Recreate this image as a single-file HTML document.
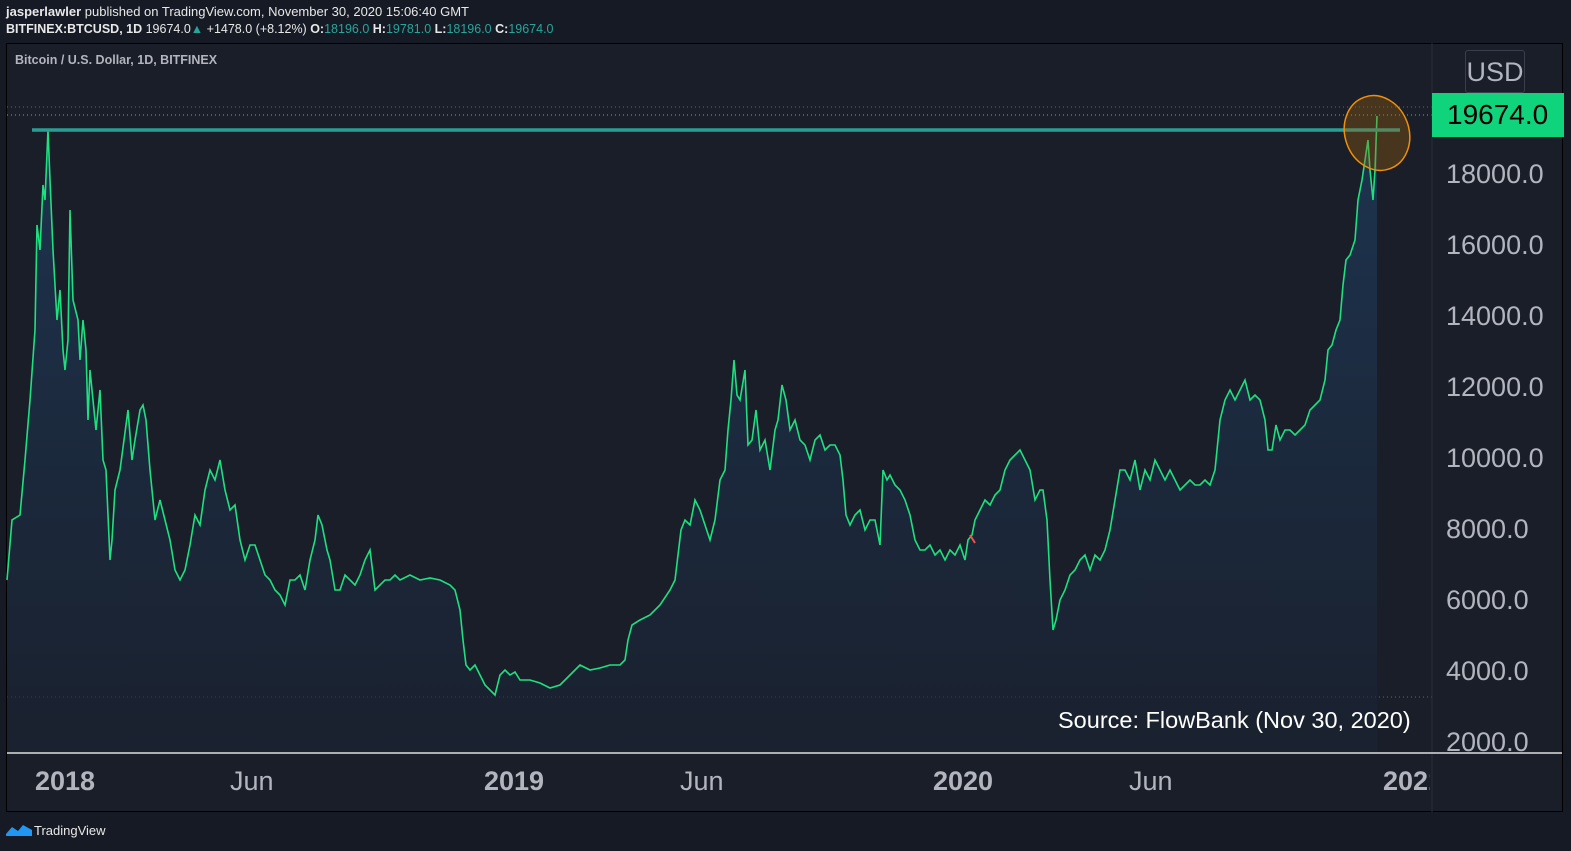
<!DOCTYPE html>
<html><head><style>
body{margin:0;width:1571px;height:851px;background:#161a25;font-family:"Liberation Sans",sans-serif;overflow:hidden;position:relative}
.t{position:absolute;white-space:nowrap}
</style></head><body>
<div class="t" style="left:6px;top:4px;font-size:13px;color:#e8e8e8"><b>jasperlawler</b> published on TradingView.com, November 30, 2020 15:06:40 GMT</div>
<div class="t" style="left:6px;top:22px;font-size:12.5px;color:#e8e8e8"><b>BITFINEX:BTCUSD, 1D</b> 19674.0<span style="color:#26a69a">▲</span> +1478.0 (+8.12%) <b>O:</b><span style="color:#26a69a">18196.0</span> <b>H:</b><span style="color:#26a69a">19781.0</span> <b>L:</b><span style="color:#26a69a">18196.0</span> <b>C:</b><span style="color:#26a69a">19674.0</span></div>
<div style="position:absolute;left:6px;top:43px;width:1557px;height:769px;background:#1a1e29;border:1px solid #000;box-sizing:border-box"></div>
<div class="t" style="left:15px;top:53px;font-size:12.5px;color:#b2b5be;font-weight:bold">Bitcoin / U.S. Dollar, 1D, BITFINEX</div>
<svg style="position:absolute;left:0;top:0" width="1571" height="851">
<defs><linearGradient id="g" x1="0" y1="0" x2="0" y2="1"><stop offset="0" stop-color="#1e3a5a" stop-opacity=".8"/><stop offset="1" stop-color="#1a2333" stop-opacity=".6"/></linearGradient></defs>
<line x1="7" y1="107" x2="1432" y2="107" stroke="#666" stroke-dasharray="1,3"/>
<line x1="7" y1="115" x2="1432" y2="115" stroke="#e57373" stroke-dasharray="1,3"/>
<line x1="7" y1="697" x2="1432" y2="697" stroke="#666" stroke-dasharray="1,3"/>
<polygon fill="url(#g)" points="7,753 7,580 12,520 20,515 25,460 30,400 35,330 37,225 40,250 43,185 45,200 48,130 50,180 53,250 57,320 60,290 63,350 65,370 68,340 70,210 73,300 78,320 80,360 83,320 86,350 88,420 90,370 93,400 96,430 100,390 103,460 106,470 110,560 112,540 115,490 120,470 124,440 128,410 132,460 135,440 140,410 143,405 146,420 150,470 155,520 160,500 165,520 170,540 175,570 180,580 185,570 190,545 195,515 200,525 205,490 210,470 215,480 220,460 225,490 230,510 235,505 240,540 245,560 250,545 255,545 260,560 265,575 270,580 275,590 280,595 285,605 290,580 295,580 300,575 305,590 310,560 315,540 318,515 322,525 327,550 330,560 335,590 340,590 345,575 350,580 355,585 360,575 365,560 370,550 375,590 380,585 385,580 390,580 395,575 400,580 410,575 420,580 430,578 440,580 450,585 455,590 460,610 463,640 466,665 470,670 475,665 480,675 485,685 490,690 495,695 500,675 505,670 510,675 515,672 520,680 530,680 540,683 550,688 560,685 570,675 575,670 580,665 590,670 600,668 610,665 620,665 625,660 628,640 632,625 640,620 650,615 660,605 670,590 675,580 678,555 681,530 685,520 690,525 695,500 700,510 705,525 710,540 715,520 720,480 725,470 728,430 731,400 734,360 737,395 740,400 745,370 748,445 752,440 756,410 760,450 765,440 770,470 775,430 778,420 782,385 786,400 790,430 795,420 800,440 805,445 810,460 815,440 820,435 825,450 830,445 835,445 840,455 843,480 846,515 850,525 855,515 860,510 865,530 870,520 875,520 880,545 883,470 887,480 890,475 895,485 900,490 905,500 910,515 915,540 920,550 925,550 930,545 935,555 940,550 945,560 950,550 955,555 960,545 965,560 968,540 972,535 975,520 980,510 985,500 990,505 995,495 1000,490 1005,470 1010,460 1015,455 1020,450 1025,460 1030,470 1035,500 1040,490 1043,490 1047,520 1050,580 1053,630 1056,620 1060,600 1065,590 1070,575 1075,570 1080,560 1085,555 1090,570 1095,555 1100,560 1105,550 1110,530 1115,500 1120,470 1125,470 1130,480 1135,460 1140,490 1145,470 1150,480 1155,460 1160,470 1165,480 1170,470 1175,480 1180,490 1185,485 1190,480 1195,485 1200,485 1205,480 1210,485 1215,470 1220,420 1225,400 1230,390 1235,400 1240,390 1245,380 1250,400 1255,395 1260,400 1265,420 1268,450 1272,450 1276,425 1280,440 1285,430 1290,430 1295,435 1300,430 1305,425 1310,410 1315,405 1320,400 1325,380 1328,350 1332,345 1336,330 1340,320 1343,285 1346,260 1350,255 1355,240 1358,200 1362,180 1365,160 1368,140 1370,170 1373,200 1375,170 1377,116 1377,753"/>
<polyline fill="none" stroke="#1fe07f" stroke-width="1.6" points="7,580 12,520 20,515 25,460 30,400 35,330 37,225 40,250 43,185 45,200 48,130 50,180 53,250 57,320 60,290 63,350 65,370 68,340 70,210 73,300 78,320 80,360 83,320 86,350 88,420 90,370 93,400 96,430 100,390 103,460 106,470 110,560 112,540 115,490 120,470 124,440 128,410 132,460 135,440 140,410 143,405 146,420 150,470 155,520 160,500 165,520 170,540 175,570 180,580 185,570 190,545 195,515 200,525 205,490 210,470 215,480 220,460 225,490 230,510 235,505 240,540 245,560 250,545 255,545 260,560 265,575 270,580 275,590 280,595 285,605 290,580 295,580 300,575 305,590 310,560 315,540 318,515 322,525 327,550 330,560 335,590 340,590 345,575 350,580 355,585 360,575 365,560 370,550 375,590 380,585 385,580 390,580 395,575 400,580 410,575 420,580 430,578 440,580 450,585 455,590 460,610 463,640 466,665 470,670 475,665 480,675 485,685 490,690 495,695 500,675 505,670 510,675 515,672 520,680 530,680 540,683 550,688 560,685 570,675 575,670 580,665 590,670 600,668 610,665 620,665 625,660 628,640 632,625 640,620 650,615 660,605 670,590 675,580 678,555 681,530 685,520 690,525 695,500 700,510 705,525 710,540 715,520 720,480 725,470 728,430 731,400 734,360 737,395 740,400 745,370 748,445 752,440 756,410 760,450 765,440 770,470 775,430 778,420 782,385 786,400 790,430 795,420 800,440 805,445 810,460 815,440 820,435 825,450 830,445 835,445 840,455 843,480 846,515 850,525 855,515 860,510 865,530 870,520 875,520 880,545 883,470 887,480 890,475 895,485 900,490 905,500 910,515 915,540 920,550 925,550 930,545 935,555 940,550 945,560 950,550 955,555 960,545 965,560 968,540 972,535 975,520 980,510 985,500 990,505 995,495 1000,490 1005,470 1010,460 1015,455 1020,450 1025,460 1030,470 1035,500 1040,490 1043,490 1047,520 1050,580 1053,630 1056,620 1060,600 1065,590 1070,575 1075,570 1080,560 1085,555 1090,570 1095,555 1100,560 1105,550 1110,530 1115,500 1120,470 1125,470 1130,480 1135,460 1140,490 1145,470 1150,480 1155,460 1160,470 1165,480 1170,470 1175,480 1180,490 1185,485 1190,480 1195,485 1200,485 1205,480 1210,485 1215,470 1220,420 1225,400 1230,390 1235,400 1240,390 1245,380 1250,400 1255,395 1260,400 1265,420 1268,450 1272,450 1276,425 1280,440 1285,430 1290,430 1295,435 1300,430 1305,425 1310,410 1315,405 1320,400 1325,380 1328,350 1332,345 1336,330 1340,320 1343,285 1346,260 1350,255 1355,240 1358,200 1362,180 1365,160 1368,140 1370,170 1373,200 1375,170 1377,116"/>
<line x1="970" y1="535" x2="975" y2="543" stroke="#ef5350" stroke-width="2"/>
<line x1="32" y1="130" x2="1400" y2="130" stroke="#2a9d94" stroke-width="3.5"/>
<ellipse cx="1377" cy="133" rx="32" ry="38" transform="rotate(-20 1377 133)" fill="#a0600a" fill-opacity=".35" stroke="#f0900a" stroke-width="1.5"/>
<line x1="1432" y1="43" x2="1432" y2="812" stroke="#2a2e39"/>
<line x1="7" y1="753" x2="1562" y2="753" stroke="#ddd" stroke-width="1.5"/>
<g transform="translate(6,822)" fill="#2196f3"><path d="M0 12 L6 5 L12 9 L17 3 L26 8 L26 14 L0 14Z"/></g>
</svg>
<div class="t" style="left:1058px;top:707px;font-size:23.5px;color:#fff">Source: FlowBank (Nov 30, 2020)</div>
<div style="position:absolute;left:1465px;top:50px;width:60px;height:43px;border:1px solid #3a3e4a;border-radius:3px;box-sizing:border-box;color:#b2b5be;font-size:27px;text-align:center;line-height:42px">USD</div>
<div style="position:absolute;left:1432px;top:93px;width:132px;height:44px;background:#0fd47c;color:#000;font-size:28px;line-height:44px;padding-left:15px;box-sizing:border-box">19674.0</div>
<div style="position:absolute;left:1446px;top:139px;color:#b2b5be;font-size:27px;line-height:71px">18000.0<br>16000.0<br>14000.0<br>12000.0<br>10000.0<br>8000.0<br>6000.0<br>4000.0<br>2000.0</div>
<div class="t" style="left:35px;top:766px;font-size:27px;color:#b2b5be;font-weight:bold">2018</div>
<div class="t" style="left:230px;top:766px;font-size:27px;color:#b2b5be">Jun</div>
<div class="t" style="left:484px;top:766px;font-size:27px;color:#b2b5be;font-weight:bold">2019</div>
<div class="t" style="left:680px;top:766px;font-size:27px;color:#b2b5be">Jun</div>
<div class="t" style="left:933px;top:766px;font-size:27px;color:#b2b5be;font-weight:bold">2020</div>
<div class="t" style="left:1129px;top:766px;font-size:27px;color:#b2b5be">Jun</div>
<div class="t" style="left:1383px;top:766px;font-size:27px;color:#b2b5be;font-weight:bold;width:47px;overflow:hidden">2021</div>
<div class="t" style="left:34px;top:823px;font-size:13px;color:#e8e8e8">TradingView</div>
</body></html>
